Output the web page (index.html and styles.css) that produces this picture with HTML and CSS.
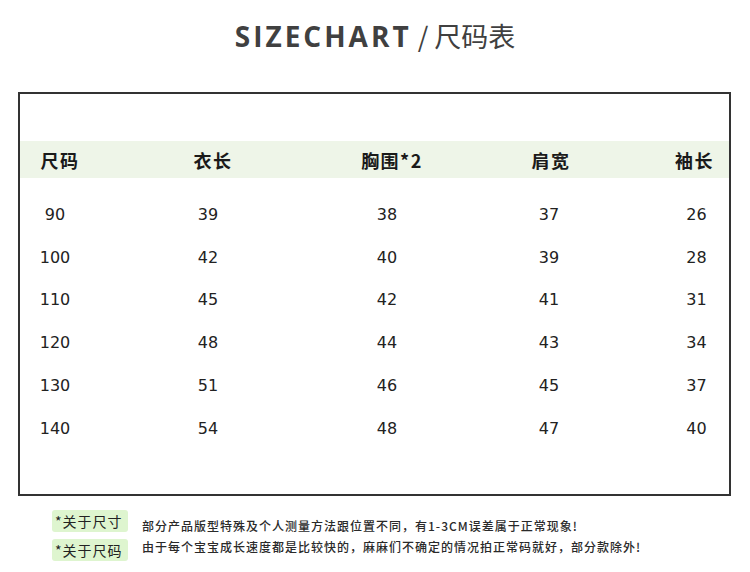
FILE: index.html
```html
<!DOCTYPE html>
<html lang="zh">
<head>
<meta charset="utf-8">
<link rel="stylesheet" href="styles.css">
</head>
<body>
<div class="page">
  <h1 class="title"><span class="en">SIZECHART</span><span class="cn"> / 尺码表</span></h1>
  <div class="chart">
    <div class="head">
      <div class="c1">尺码</div>
      <div class="c2">衣长</div>
      <div class="c3">胸围*2</div>
      <div class="c4">肩宽</div>
      <div class="c5">袖长</div>
    </div>
    <div class="rows">
      <div class="row"><div class="c1">90</div><div class="c2">39</div><div class="c3">38</div><div class="c4">37</div><div class="c5">26</div></div>
      <div class="row"><div class="c1">100</div><div class="c2">42</div><div class="c3">40</div><div class="c4">39</div><div class="c5">28</div></div>
      <div class="row"><div class="c1">110</div><div class="c2">45</div><div class="c3">42</div><div class="c4">41</div><div class="c5">31</div></div>
      <div class="row"><div class="c1">120</div><div class="c2">48</div><div class="c3">44</div><div class="c4">43</div><div class="c5">34</div></div>
      <div class="row"><div class="c1">130</div><div class="c2">51</div><div class="c3">46</div><div class="c4">45</div><div class="c5">37</div></div>
      <div class="row"><div class="c1">140</div><div class="c2">54</div><div class="c3">48</div><div class="c4">47</div><div class="c5">40</div></div>
    </div>
  </div>
  <div class="notes">
    <div class="badges">
      <span class="badge">*关于尺寸</span>
      <span class="badge">*关于尺码</span>
    </div>
    <div class="texts">
      <p>部分产品版型特殊及个人测量方法跟位置不同，有1-3CM误差属于正常现象!</p>
      <p>由于每个宝宝成长速度都是比较快的，麻麻们不确定的情况拍正常码就好，部分款除外!</p>
    </div>
  </div>
</div>
</body>
</html>
```

FILE: styles.css
```css
html, body {
  margin: 0;
  padding: 0;
  background: #ffffff;
}

.page {
  width: 750px;
  height: 572px;
  font-family: "Noto Sans CJK SC", "Noto Sans", sans-serif;
  color: #222;
}

.title {
  margin: 0;
  padding-top: 17px;
  height: 92px;
  box-sizing: border-box;
  text-align: center;
  font-size: 28px;
  line-height: 36px;
  color: #404040;
  font-weight: normal;
}

.title .en {
  font-family: "Open Sans", "Noto Sans", sans-serif;
  font-weight: 700;
  letter-spacing: 3px;
}

.title .cn {
  font-family: "Noto Sans CJK SC", sans-serif;
  font-weight: 400;
  font-size: 27px;
}

.chart {
  margin-left: 18px;
  width: 713px;
  height: 404px;
  box-sizing: border-box;
  border: 2px solid #333;
  padding-top: 47px;
}

.head,
.row {
  display: grid;
  grid-template-columns: 80px 226px 132px 186px 85px;
  align-items: center;
}

.head {
  height: 37px;
  background: #eef5e8;
  font-weight: 700;
  font-size: 18px;
  letter-spacing: 1.5px;
  color: #1a1a1a;
}

.head > div,
.row > div {
  text-align: center;
}

.head .c5 {
  padding-left: 16px;
}

.rows {
  padding-top: 15px;
}

.row {
  height: 42.8px;
  font-family: "DejaVu Sans", "Noto Sans", sans-serif;
  font-size: 16px;
  color: #222;
}

.row .c1,
.row .c2,
.row .c3 {
  padding-right: 10px;
}

.row .c4 {
  padding-right: 4px;
}

.row .c5 {
  padding-left: 20px;
}

.notes {
  display: flex;
  margin-top: 14px;
  padding-left: 52px;
}

.badges {
  display: flex;
  flex-direction: column;
  gap: 7px;
  width: 90px;
}

.badge {
  display: block;
  width: 76px;
  height: 22px;
  line-height: 22px;
  box-sizing: border-box;
  padding-left: 3px;
  background: #def5cf;
  border-radius: 3px;
  font-size: 14px;
  letter-spacing: 1px;
  color: #222;
}

.texts {
  padding-top: 5px;
}

.texts p {
  margin: 0;
  height: 21px;
  line-height: 21px;
  font-size: 12px;
  letter-spacing: 1px;
  font-weight: 500;
  color: #2a2a2a;
}
```
